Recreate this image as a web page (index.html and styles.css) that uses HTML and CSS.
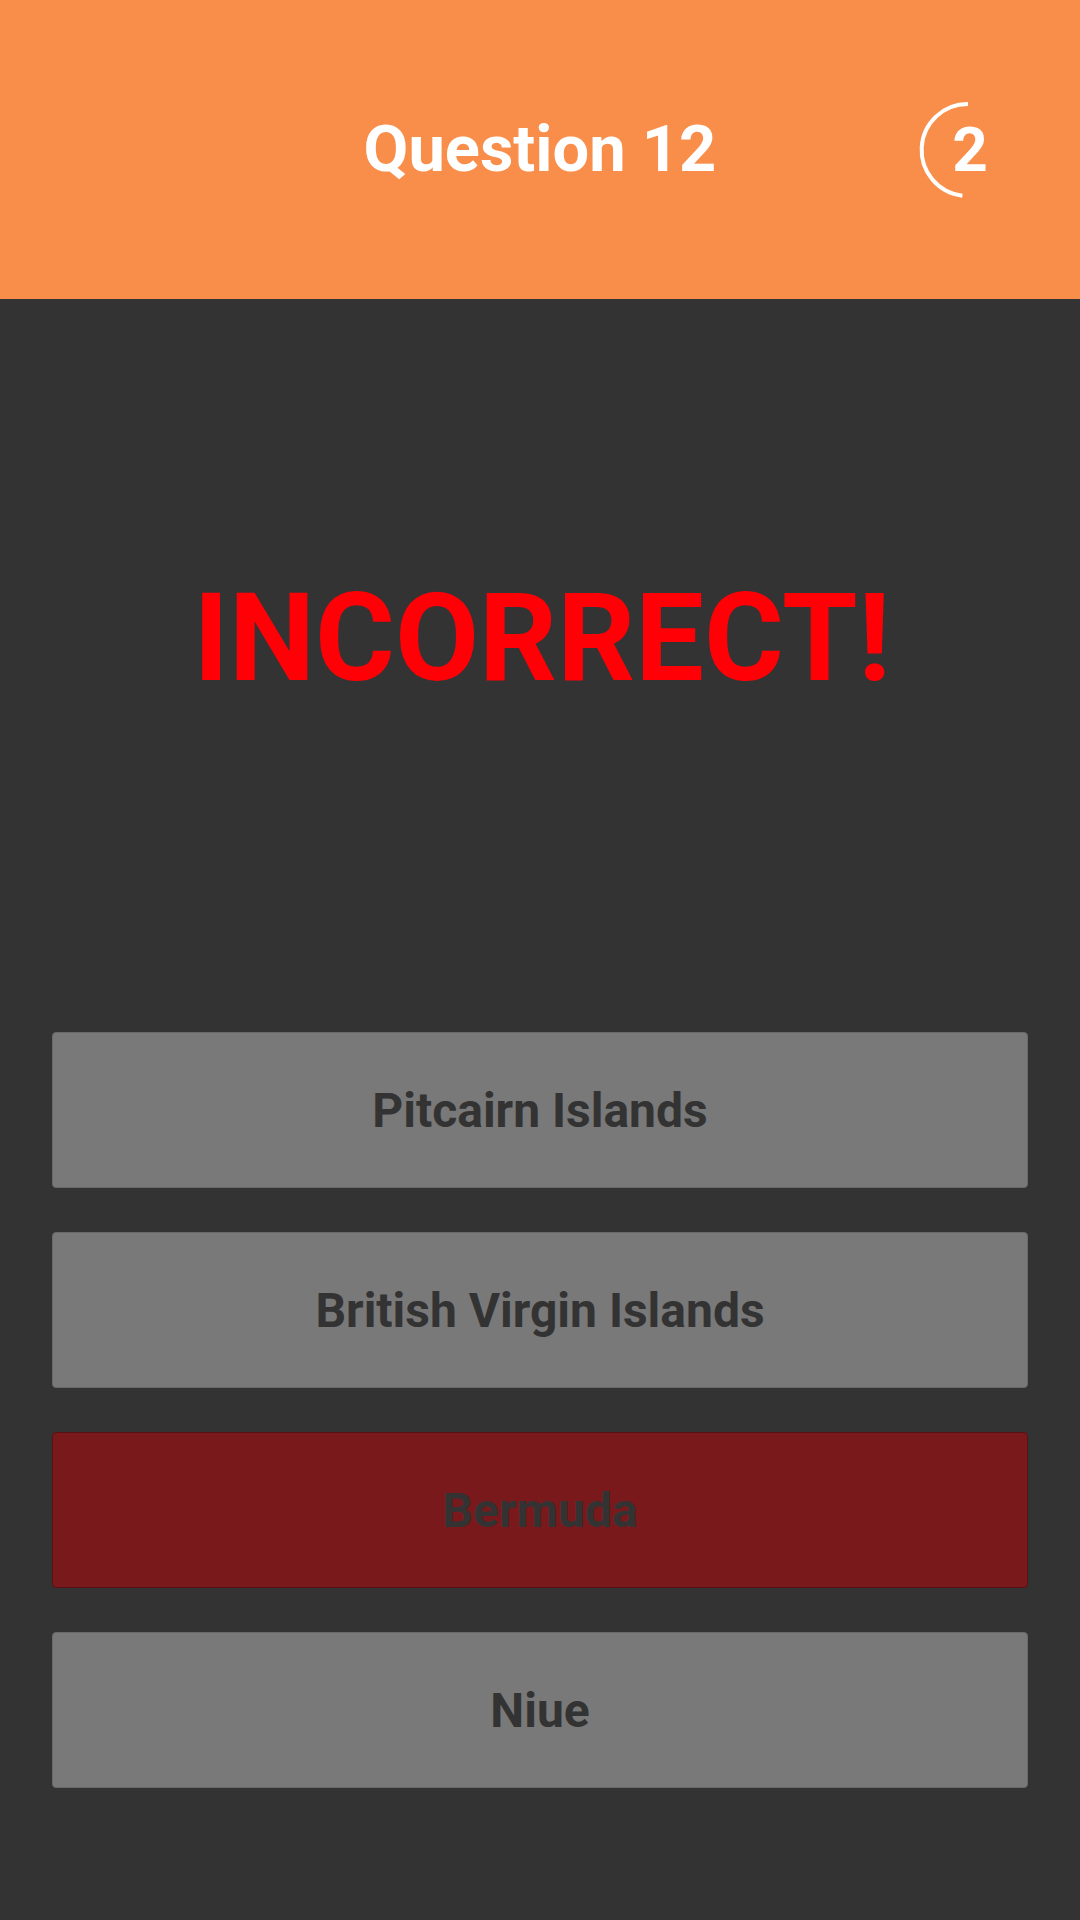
FILE: index.html
```html
<!DOCTYPE html>
<html>
<head>
<meta charset="utf-8">
<link rel="stylesheet" href="styles.css">
</head>
<body>
<div class="app">
  <header class="topbar">
    <h1 class="title">Question 12</h1>
    <div class="timer">
      <svg class="timer-ring" width="104" height="104" viewBox="0 0 104 104">
        <path d="M52 6 A46 46 0 0 0 46.4 97.7" fill="none" stroke="#ffffff" stroke-width="4"/>
      </svg>
      <span class="timer-num">2</span>
    </div>
  </header>
  <main class="content">
    <div class="result">INCORRECT!</div>
    <div class="answers">
      <div class="answer">Pitcairn Islands</div>
      <div class="answer">British Virgin Islands</div>
      <div class="answer wrong">Bermuda</div>
      <div class="answer">Niue</div>
    </div>
  </main>
</div>
</body>
</html>
```

FILE: styles.css
```css
html, body {
  margin: 0;
  padding: 0;
  background: #333333;
  font-family: Roboto, "Liberation Sans", sans-serif;
}

.app {
  width: 1080px;
  height: 1920px;
  display: flex;
  flex-direction: column;
  background: #333333;
}

.topbar {
  position: relative;
  height: 299px;
  background: #f98e4a;
  display: flex;
  align-items: center;
  justify-content: center;
  flex-shrink: 0;
}

.title {
  margin: 0;
  font-size: 65px;
  line-height: 1;
  font-weight: 700;
  color: #ffffff;
}

.timer {
  position: absolute;
  left: 916px;
  top: 98px;
  width: 104px;
  height: 104px;
  display: flex;
  align-items: center;
  justify-content: center;
}

.timer-ring {
  position: absolute;
  left: 0;
  top: 0;
}

.timer-num {
  position: relative;
  left: 2px;
  font-size: 62px;
  line-height: 1;
  font-weight: 700;
  color: #ffffff;
}

.content {
  display: flex;
  flex-direction: column;
  padding-top: 278px;
}

.result {
  font-size: 122px;
  line-height: 124px;
  font-weight: 700;
  color: #ff0006;
  text-align: center;
  padding-left: 4px;
}

.answers {
  margin-top: 331px;
  padding: 0 52px;
  display: flex;
  flex-direction: column;
  gap: 44px;
}

.answer {
  height: 156px;
  box-sizing: border-box;
  background: #797979;
  border: 1px solid #6a6a6a;
  border-radius: 4px;
  display: flex;
  align-items: center;
  justify-content: center;
  font-size: 48px;
  font-weight: 700;
  color: #333333;
}

.answer.wrong {
  background: #7a191b;
  border-color: #5a1113;
}
```
